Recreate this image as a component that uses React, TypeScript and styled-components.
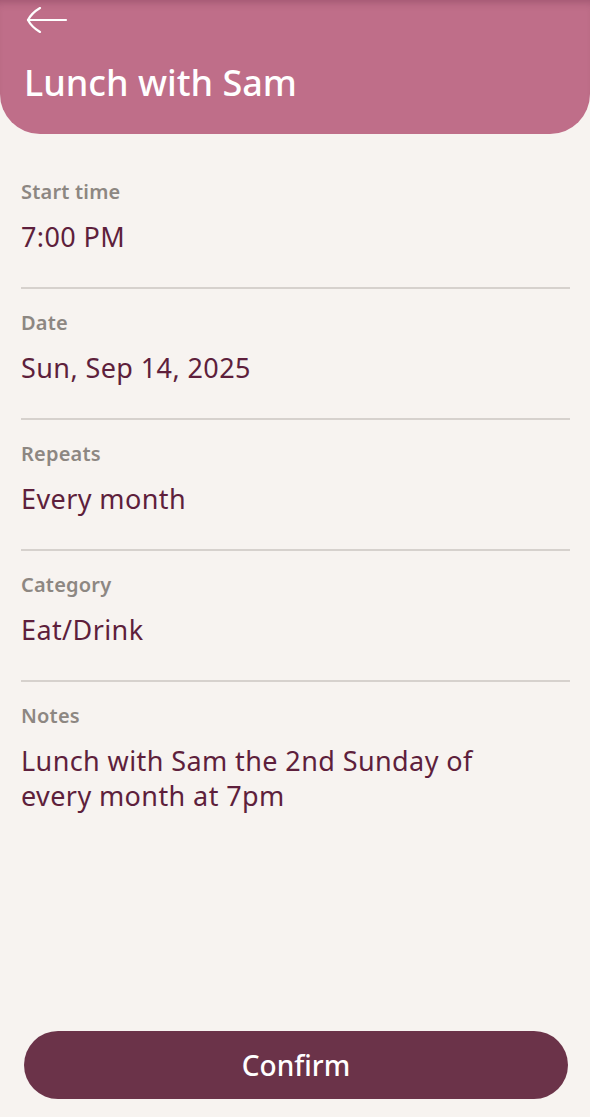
import React from 'react'
import styled, { createGlobalStyle } from 'styled-components'

const GlobalStyle = createGlobalStyle`
  html, body {
    margin: 0;
    padding: 0;
    background: #f7f3f0;
  }
  * {
    box-sizing: border-box;
  }
`

const FONT = `'Noto Sans', Lato, sans-serif`

const Page = styled.div`
  min-height: 100vh;
  display: flex;
  flex-direction: column;
  font-family: ${FONT};
  background: #f7f3f0;
`

const Header = styled.header`
  height: 134px;
  background: #bf6e89;
  border-radius: 0 0 40px 40px;
  box-shadow: inset 0 8px 8px -6px rgba(60, 10, 30, 0.25);
  padding: 0 24px;
  display: flex;
  flex-direction: column;
`

const BackButton = styled.button`
  all: unset;
  display: flex;
  width: 44px;
  height: 26px;
  margin: 7px 0 0 2px;
  cursor: pointer;
`

const Title = styled.h1`
  margin: 27px 0 0;
  font-size: 36px;
  font-weight: 500;
  line-height: 46px;
  color: #ffffff;
  letter-spacing: 0;
`

const Content = styled.main`
  padding: 24px 20px 0 21px;
  display: flex;
  flex-direction: column;
`

const Field = styled.section<{ last?: boolean }>`
  padding: 22px 0 ${({ last }) => (last ? 0 : 33)}px;
  border-bottom: ${({ last }) => (last ? 'none' : '2px solid #d6d1cd')};
  display: flex;
  flex-direction: column;
  gap: 15px;
`

const Label = styled.div`
  font-size: 20px;
  font-weight: 600;
  line-height: 24px;
  letter-spacing: 0.2px;
  color: #8d8782;
`

const Value = styled.div`
  font-size: 27px;
  font-weight: 400;
  line-height: 35px;
  letter-spacing: 0.4px;
  color: #5e1f3c;
  max-width: 500px;
`

const Spacer = styled.div`
  flex: 1;
`

const ConfirmButton = styled.button`
  margin: 0 22px 18px 24px;
  height: 68px;
  border: none;
  border-radius: 34px;
  background: #6b3349;
  color: #ffffff;
  font-family: ${FONT};
  font-size: 28px;
  font-weight: 500;
  cursor: pointer;
`

const fields = [
  { label: 'Start time', value: '7:00 PM' },
  { label: 'Date', value: 'Sun, Sep 14, 2025' },
  { label: 'Repeats', value: 'Every month' },
  { label: 'Category', value: 'Eat/Drink' },
  { label: 'Notes', value: 'Lunch with Sam the 2nd Sunday of every month at 7pm' },
]

export default function App() {
  return (
    <Page>
      <GlobalStyle />
      <Header>
        <BackButton aria-label="Back">
          <svg width="44" height="26" viewBox="0 0 44 26" fill="none">
            <path d="M2 13 H40" stroke="#fff" strokeWidth="2.2" strokeLinecap="round" />
            <path d="M14 1 C9 4 4 9 2 13 C4 17 9 22 14 25" stroke="#fff" strokeWidth="2.2" strokeLinecap="round" />
          </svg>
        </BackButton>
        <Title>Lunch with Sam</Title>
      </Header>

      <Content>
        {fields.map((field, index) => (
          <Field key={field.label} last={index === fields.length - 1}>
            <Label>{field.label}</Label>
            <Value>{field.value}</Value>
          </Field>
        ))}
      </Content>

      <Spacer />
      <ConfirmButton>Confirm</ConfirmButton>
    </Page>
  )
}
